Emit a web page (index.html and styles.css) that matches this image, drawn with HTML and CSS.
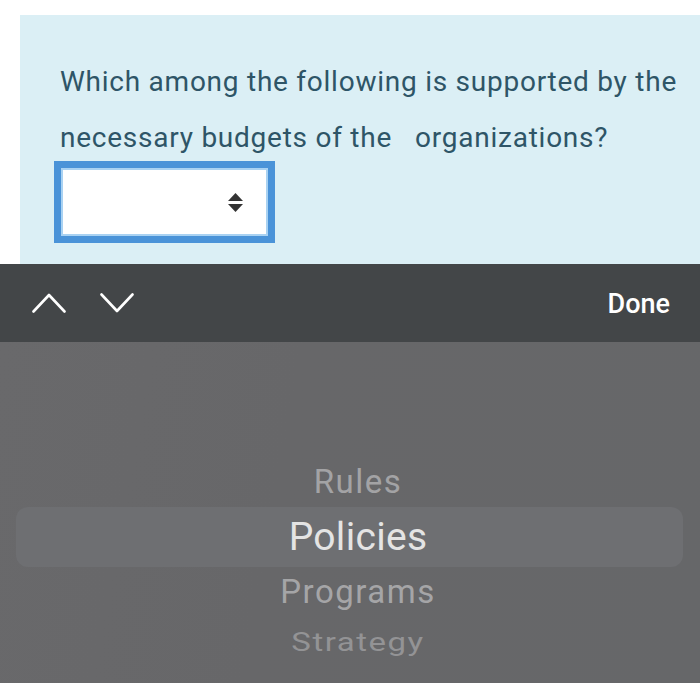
FILE: index.html
```html
<!DOCTYPE html>
<html>
<head>
<meta charset="utf-8">
<link rel="stylesheet" href="styles.css">
</head>
<body>
<div class="panel">
  <p class="question">Which among the following is supported by the necessary budgets of the&nbsp;&nbsp; organizations?</p>
  <div class="select">
    <svg class="select-arrows" width="15" height="19" viewBox="0 0 15 19">
      <path d="M7.5 0 L15 8 L0 8 Z" fill="#333"/>
      <path d="M0 11 L15 11 L7.5 19 Z" fill="#333"/>
    </svg>
  </div>
</div>
<div class="toolbar">
  <div class="nav">
    <svg width="34" height="20" viewBox="0 0 34 20"><polyline points="1.5,18.5 17,2 32.5,18.5" fill="none" stroke="#fff" stroke-width="2.6" stroke-linecap="round" stroke-linejoin="round"/></svg>
    <svg width="34" height="20" viewBox="0 0 34 20"><polyline points="1.5,1.5 17,18 32.5,1.5" fill="none" stroke="#fff" stroke-width="2.6" stroke-linecap="round" stroke-linejoin="round"/></svg>
  </div>
  <div class="done">Done</div>
</div>
<div class="picker">
  <div class="item item-rules">Rules</div>
  <div class="item item-selected">Policies</div>
  <div class="item item-programs">Programs</div>
  <div class="item item-strategy"><span class="squash">Strategy</span></div>
</div>
</body>
</html>
```
FILE: styles.css
```css
html, body {
  margin: 0;
  padding: 0;
  background: #ffffff;
  width: 700px;
  height: 685px;
  overflow: hidden;
  font-family: Roboto, "Liberation Sans", sans-serif;
}

.panel {
  margin: 15px 0 0 20px;
  height: 249px;
  box-sizing: border-box;
  padding: 39px 0 0 40px;
  background: #dbeff5;
}

.question {
  margin: 0;
  font-size: 28px;
  line-height: 56px;
  letter-spacing: 0.75px;
  color: #2e5567;
  width: 630px;
}

.select {
  margin: -5px 0 0 -6px;
  width: 221px;
  height: 82px;
  box-sizing: border-box;
  border: 7px solid #4a93d8;
  box-shadow: inset 0 0 0 2px #a9d2f2;
  background: #ffffff;
  display: flex;
  align-items: center;
  justify-content: flex-end;
  padding: 1px 25px 0 0;
}

.toolbar {
  height: 78px;
  background: #434648;
  display: flex;
  align-items: center;
  justify-content: space-between;
  padding: 0 30px 0 32px;
}

.nav {
  display: flex;
  gap: 34px;
  align-items: center;
}

.done {
  color: #ffffff;
  font-size: 27px;
  font-weight: 500;
  padding-top: 2px;
}

.picker {
  height: 341px;
  box-sizing: border-box;
  padding-top: 120px;
  background: linear-gradient(100deg, #69696b 0%, #676769 40%, #666769 100%);
}

.item {
  text-align: center;
  padding-left: 16px;
}

.item-rules {
  font-size: 33px;
  line-height: 40px;
  letter-spacing: 1.5px;
  color: #a3a3a5;
  margin-bottom: 5px;
}

.item-selected {
  margin: 0 17px 0 16px;
  padding-left: 17px;
  height: 60px;
  border-radius: 12px;
  background: #6e6f72;
  font-size: 39px;
  line-height: 60px;
  letter-spacing: 0.3px;
  color: #e4e4e4;
}

.item-programs {
  font-size: 33px;
  line-height: 50px;
  letter-spacing: 1.5px;
  color: #a5a5a7;
}

.item-strategy {
  font-size: 33px;
  line-height: 50px;
  letter-spacing: 1.5px;
  color: #939395;
}

.squash {
  display: inline-block;
  transform: scaleY(0.8);
  transform-origin: 50% 52%;
}
```
